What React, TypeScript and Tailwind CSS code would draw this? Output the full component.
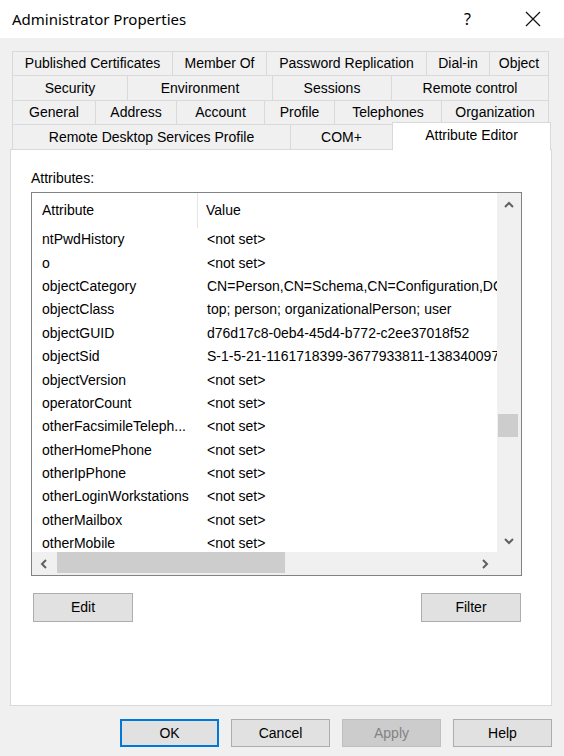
import React from "react";

// Tab strip rows, top to bottom. Widths are pixel widths of each tab.
const tabRows: [string, number][][] = [
  [
    ["Published Certificates", 160],
    ["Member Of", 94],
    ["Password Replication", 160],
    ["Dial-in", 63],
    ["Object", 60],
  ],
  [
    ["Security", 115],
    ["Environment", 145],
    ["Sessions", 119],
    ["Remote control", 158],
  ],
  [
    ["General", 83],
    ["Address", 81],
    ["Account", 88],
    ["Profile", 70],
    ["Telephones", 107],
    ["Organization", 108],
  ],
];

const rowHeights = ["h-[24px]", "h-[25px]", "h-[24px]"];

const attributes: [string, string][] = [
  ["ntPwdHistory", "<not set>"],
  ["o", "<not set>"],
  ["objectCategory", "CN=Person,CN=Schema,CN=Configuration,DC=corp,DC=local"],
  ["objectClass", "top; person; organizationalPerson; user"],
  ["objectGUID", "d76d17c8-0eb4-45d4-b772-c2ee37018f52"],
  ["objectSid", "S-1-5-21-1161718399-3677933811-1383400974-500"],
  ["objectVersion", "<not set>"],
  ["operatorCount", "<not set>"],
  ["otherFacsimileTeleph...", "<not set>"],
  ["otherHomePhone", "<not set>"],
  ["otherIpPhone", "<not set>"],
  ["otherLoginWorkstations", "<not set>"],
  ["otherMailbox", "<not set>"],
  ["otherMobile", "<not set>"],
];

const sans = "font-['Liberation_Sans',Arial,sans-serif]";

function Chevron({ dir }: { dir: "up" | "down" | "left" | "right" }) {
  const pts = {
    up: "1,6 5,2 9,6",
    down: "1,2 5,6 9,2",
    left: "6,1 2,5 6,9",
    right: "2,1 6,5 2,9",
  }[dir];
  const vertical = dir === "up" || dir === "down";
  return (
    <svg
      width={vertical ? 10 : 8}
      height={vertical ? 8 : 10}
      viewBox={vertical ? "0 0 10 8" : "0 0 8 10"}
    >
      <polyline points={pts} fill="none" stroke="#606060" strokeWidth="2" />
    </svg>
  );
}

function WinButton({
  label,
  variant = "normal",
  className = "",
}: {
  label: string;
  variant?: "normal" | "default" | "disabled";
  className?: string;
}) {
  const look =
    variant === "default"
      ? "border-2 border-[#0078d7] bg-[#e1e1e1] text-black"
      : variant === "disabled"
        ? "border border-[#bfbfbf] bg-[#cccccc] text-[#838383]"
        : "border border-[#adadad] bg-[#e1e1e1] text-black";
  return (
    <div
      className={`flex items-center justify-center text-[14px] ${look} ${className}`}
    >
      {label}
    </div>
  );
}

export default function App() {
  return (
    <div className={`w-[564px] h-[756px] bg-[#f0f0f0] flex flex-col ${sans} overflow-hidden`}>
      {/* title bar */}
      <div className="h-[38px] bg-white flex items-center shrink-0">
        <span className="ml-[12px] text-[15px] font-['Noto_Sans','Segoe_UI',sans-serif] text-black">
          Administrator Properties
        </span>
        <span className="ml-auto text-[16px] font-['Noto_Sans',sans-serif] text-black mr-[54px]">
          ?
        </span>
        <svg width="16" height="16" viewBox="0 0 16 16" className="mr-[23px]">
          <path d="M1 1 L15 15 M15 1 L1 15" stroke="#111" strokeWidth="1.2" fill="none" />
        </svg>
      </div>

      {/* tabs */}
      <div className="mt-[13px] pl-[12px] flex flex-col">
        {tabRows.map((row, ri) => (
          <div key={ri} className={`flex ${rowHeights[ri]}`}>
            {row.map(([label, w], i) => (
              <div
                key={label}
                style={{ width: w }}
                className={`flex items-center justify-center text-[14px] text-black border-t border-l border-[#d9d9d9] bg-[#f0f0f0] ${
                  i === row.length - 1 ? "border-r" : ""
                }`}
              >
                {label}
              </div>
            ))}
          </div>
        ))}
        <div className="flex items-start h-[25px]">
          <div className="w-[278px] h-[25px] flex items-center justify-center text-[14px] border-t border-l border-[#d9d9d9]">
            Remote Desktop Services Profile
          </div>
          <div className="w-[102px] h-[25px] flex items-center justify-center text-[14px] border-t border-l border-[#d9d9d9]">
            COM+
          </div>
          <div className="relative z-10 -mt-[2px] -mb-[1px] w-[159px] h-[28px] bg-white border-t border-l border-r border-[#d9d9d9] flex items-center justify-center pb-[2px] text-[14px]">
            Attribute Editor
          </div>
        </div>
      </div>

      {/* tab page */}
      <div className="ml-[10px] w-[542px] h-[557px] bg-white border border-[#d9d9d9] flex flex-col pl-[20px]">
        <div className="mt-[20px] h-[16px] leading-[16px] text-[14px]">Attributes:</div>

        <div className="mt-[6px] w-[491px] h-[384px] border border-[#828282] flex flex-col">
          <div className="flex flex-1 min-h-0">
            <div className="flex-1 overflow-hidden flex flex-col">
              <div className="h-[35px] shrink-0 flex items-center text-[14px]">
                <div className="w-[166px] pl-[10px] h-full flex items-center border-r border-[#e5e5e5]">
                  Attribute
                </div>
                <div className="pl-[8px]">Value</div>
              </div>
              {attributes.map(([name, value]) => (
                <div key={name} className="h-[23.4px] shrink-0 flex items-center text-[14px] whitespace-nowrap">
                  <div className="w-[166px] pl-[10px] shrink-0 overflow-hidden">{name}</div>
                  <div className="pl-[9px]">{value}</div>
                </div>
              ))}
            </div>
            {/* vertical scrollbar */}
            <div className="w-[24px] bg-[#f0f0f0] flex flex-col">
              <div className="h-[23px] flex items-center justify-center">
                <Chevron dir="up" />
              </div>
              <div className="h-[198px]" />
              <div className="h-[23px] bg-[#cdcdcd] mr-[3px] ml-[1px]" />
              <div className="flex-1" />
              <div className="h-[23px] flex items-center justify-center">
                <Chevron dir="down" />
              </div>
            </div>
          </div>
          {/* horizontal scrollbar */}
          <div className="h-[23px] flex bg-[#f0f0f0]">
            <div className="w-[24px] flex items-center justify-center">
              <Chevron dir="left" />
            </div>
            <div className="w-[228px] bg-[#cdcdcd] ml-[1px] mb-[2px]" />
            <div className="flex-1" />
            <div className="w-[24px] flex items-center justify-center">
              <Chevron dir="right" />
            </div>
            <div className="w-[24px]" />
          </div>
        </div>

        <div className="mt-[17px] ml-[2px] w-[488px] flex justify-between">
          <WinButton label="Edit" className="w-[100px] h-[29px]" />
          <WinButton label="Filter" className="w-[100px] h-[29px]" />
        </div>
      </div>

      {/* dialog buttons */}
      <div className="mt-[13px] pl-[120px] flex gap-[12px]">
        <WinButton label="OK" variant="default" className="w-[99px] h-[28px]" />
        <WinButton label="Cancel" className="w-[99px] h-[28px]" />
        <WinButton label="Apply" variant="disabled" className="w-[99px] h-[28px]" />
        <WinButton label="Help" className="w-[99px] h-[28px]" />
      </div>
    </div>
  );
}
